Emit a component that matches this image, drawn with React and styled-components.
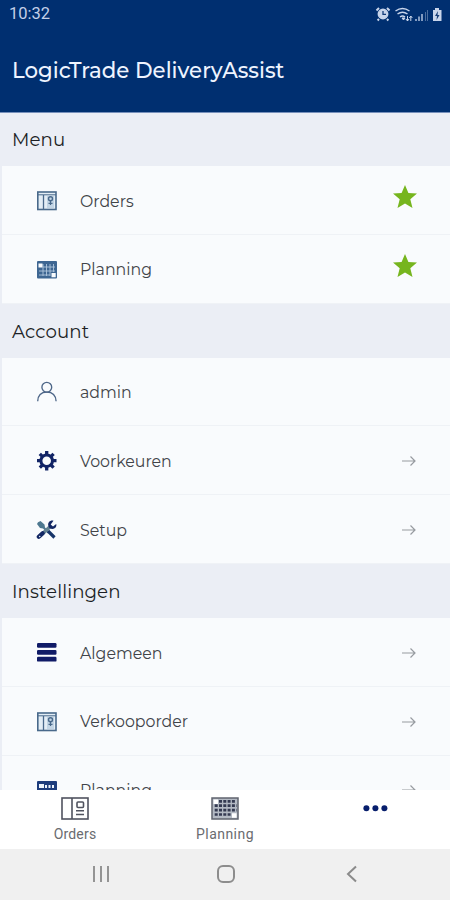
import React from "react";
import styled, { createGlobalStyle } from "styled-components";

const Global = createGlobalStyle`
  * { box-sizing: border-box; }
  body { margin: 0; background: #f9fbfd; }
`;

const Screen = styled.div`
  width: 450px;
  height: 900px;
  display: flex;
  flex-direction: column;
  overflow: hidden;
  font-family: Montserrat, Inter, sans-serif;
  background: #ebeef5;
`;

const Header = styled.header`
  flex: none;
  height: 113px;
  background: #002f70;
  border-bottom: 1px solid #7790bb;
`;

const StatusBar = styled.div`
  height: 28px;
  display: flex;
  align-items: center;
  justify-content: space-between;
  padding: 0 7px 0 9px;
`;

const Clock = styled.span`
  font: 400 16.5px/28px Roboto, sans-serif;
  color: #c3d0e8;
`;

const Title = styled.h1`
  margin: 27px 0 0 12px;
  font-size: 21.3px;
  line-height: 30px;
  font-weight: 500;
  color: #eef4ff;
  white-space: nowrap;
`;

const List = styled.main`
  flex: 1;
  min-height: 0;
  overflow: hidden;
`;

const SectionTitle = styled.h2`
  margin: 0;
  height: ${(p) => p.$height || 54}px;
  padding-left: 12px;
  font-size: 18.2px;
  line-height: ${(p) => (p.$height ? 53 : 55)}px;
  font-weight: 400;
  letter-spacing: 0.1px;
  color: #1c1f25;
`;

const Row = styled.div`
  height: 68.8px;
  margin-left: 2px;
  padding: 2px 34px 0 34px;
  display: flex;
  align-items: center;
  background: #f9fbfd;
  border-bottom: 1px solid #eff2f6;
`;

const RowIcon = styled.span`
  width: 22px;
  height: 22px;
  display: flex;
  margin-right: 22px;
`;

const Label = styled.span`
  flex: 1;
  padding-top: 1.4px;
  font-size: 15.8px;
  line-height: 22px;
  color: #414449;
`;

const StarSlot = styled.span`
  display: flex;
  margin: 0 -2px 7px 0;
`;

const Tabs = styled.nav`
  flex: none;
  height: 59px;
  display: grid;
  grid-template-columns: repeat(3, 1fr);
  background: #fff;
`;

const Tab = styled.div`
  display: flex;
  flex-direction: column;
  align-items: center;
  padding-top: 7px;
`;

const TabLabel = styled.span`
  margin-top: 5px;
  font: 400 14px/18px Roboto, sans-serif;
  letter-spacing: ${(p) => p.$track}px;
  color: #6a6c70;
`;

const SystemNav = styled.nav`
  flex: none;
  height: 51px;
  display: grid;
  grid-template-columns: repeat(3, 125.5px);
  justify-content: center;
  align-items: center;
  justify-items: center;
  padding: 0 0 1px 2px;
  background: #f0f0f0;
`;

const StatusIcons = () => (
  <svg width="68" height="20" viewBox="0 0 68 20" fill="none" stroke="#c8d5eb">
    <circle cx="8" cy="10" r="4.7" fill="#c8d5eb" strokeWidth="1.5" />
    <path d="M1.5 6.5 4 4M12 4l2.5 2.5M4 15l-1.4 1.5M12 15l1.4 1.5" strokeWidth="2" />
    <path d="M8 7v3.3h3" stroke="#123b78" strokeWidth="1.3" />
    <path d="M20.5 7q7-5 14 0M22.5 10q5-3.5 10 0M25 13q2.5-2 5 0" strokeWidth="1.5" />
    <path d="m27 14 1.5 2 1.5-2Z" fill="#c8d5eb" />
    <path d="M32.5 12v5m-1.5-2 1.5 2 1.5-2M35.8 17v-5m-1.5 2 1.5-2 1.5 2" strokeWidth="1" />
    <path d="M41 15v2M44 12.5V17M47 10v7" strokeWidth="2" opacity=".65" />
    <path d="M50.5 8v9M52.5 6v11" strokeWidth="1" opacity=".38" />
    <path d="M58 6h2V4h4v2h2.5v11H58Z" fill="#c8d5eb" stroke="none" />
    <path d="m63 7-3 5h2l-.5 4 3-5h-2Z" fill="#173e77" stroke="none" />
  </svg>
);

const OrdersIcon = () => (
  <svg width="22" height="22" viewBox="0 0 22 22" fill="none" stroke="#49698b">
    <rect x="1.8" y="2" width="18.2" height="17.5" fill="#e3edf5" strokeWidth="1.6" />
    <path d="M2 4.8h18" strokeWidth="1" />
    <path d="M7.5 5v14" strokeWidth="1.3" />
    <path d="M11 6h7v12h-7Z" fill="#c3d5e5" stroke="none" />
    <circle cx="14.5" cy="8.8" r="2" strokeWidth="1.4" />
    <path d="M14.5 11v4M12.5 13.3h4" strokeWidth="1.2" />
  </svg>
);

const PlanningIcon = () => (
  <svg width="22" height="22" viewBox="0 0 22 22">
    <rect x="1" y="2" width="20" height="17.5" rx="1" fill="#3e6692" />
    <path
      d="M7 8h12M3 12h16M3 16h11M7 5v12M10.5 5v12M14 5v12M17.5 5v8"
      stroke="#afc5dc"
      strokeWidth=".9"
      fill="none"
    />
    <path d="M2.5 4.5h4v4h-4ZM15.5 14h4.2v4.2h-4.2Z" fill="#f9fbfd" />
  </svg>
);

const PlanningCutIcon = () => (
  <svg width="22" height="22" viewBox="0 0 22 22">
    <rect x="1" y="2" width="20" height="17.5" rx="1" fill="#1d3c7c" />
    <path d="M3 5h5v4H3ZM9 6h2v3H9ZM12.5 6h2v3h-2ZM16 6h2v3h-2Z" fill="#edf4fc" />
    <path d="M3 12h16M3 16h16" stroke="#edf4fc" />
  </svg>
);

const PersonIcon = () => (
  <svg width="22" height="22" viewBox="0 0 22 22" fill="none" stroke="#4d6688" strokeWidth="1.35">
    <circle cx="10.8" cy="6.2" r="4.9" />
    <path d="M1.7 20.3c.2-6 3.8-9.2 9.1-9.2s9 3.2 9.3 9.2" />
  </svg>
);

const GearIcon = () => (
  <svg width="22" height="22" viewBox="0 0 22 22" fill="none" stroke="#122466">
    <circle cx="10.7" cy="10.7" r="5.8" strokeWidth="3" />
    <path
      d="M10.7 1v4M10.7 16.5v4M1 10.7h4M16.5 10.7h4M3.8 3.8l2.8 2.8M14.8 14.8l2.8 2.8M3.8 17.6l2.8-2.8M14.8 6.6l2.8-2.8"
      strokeWidth="3.3"
    />
  </svg>
);

const ToolsIcon = () => (
  <svg width="22" height="22" viewBox="0 0 22 22" fill="none">
    <path d="M2 3.3 4.5 2l4 3.5.5 3 5 4.5-2 1.5-5-5-3-.5-3-4Z" fill="#4e7890" />
    <path d="m12 12 6.5 6.5" stroke="#173469" strokeWidth="3.2" />
    <path d="M3.3 17.7 14 7.8" stroke="#638292" strokeWidth="3.6" />
    <path d="m2.8 17.8 3.8-3.5" stroke="#132764" strokeWidth="4.2" strokeLinecap="round" />
    <path d="M17.5 1.8c-3-1-6 1.7-5.2 4.6.6 3.4 4.2 4.4 6.3 2.8 1.7-1 2.1-3 1.6-4.3L17 7.4l-2.3-2Z" fill="#132764" />
    <circle cx="3.7" cy="17.5" r=".8" fill="#dce7f3" />
  </svg>
);

const BarsIcon = () => (
  <svg width="22" height="22" viewBox="0 0 22 22" fill="#101b67">
    <rect x="1" y="1" width="19.5" height="4.8" rx="1.2" />
    <rect x="1" y="7.9" width="19.5" height="4.8" rx="1.2" />
    <rect x="1" y="14.8" width="19.5" height="4.8" rx="1.2" />
  </svg>
);

const Star = () => (
  <StarSlot>
    <svg width="26" height="25" viewBox="0 0 26 25">
      <path d="m13 0 3.4 8.1 8.6.5-6.7 5.7 2.2 8.8-7.5-4.6-7.5 4.6 2.2-8.8L1 8.6l8.6-.5Z" fill="#76b51e" />
    </svg>
  </StarSlot>
);

const Arrow = () => (
  <svg width="14" height="12" viewBox="0 0 14 12" fill="none" stroke="#979ba0" strokeWidth="1.2">
    <path d="M0 6h13M8.5 1.5 13 6l-4.5 4.5" />
  </svg>
);

const TabOrdersIcon = () => (
  <svg width="28" height="23" viewBox="0 0 28 23" fill="none" stroke="#50535f" strokeWidth="1.6">
    <rect x="1" y="1" width="26" height="21" />
    <path d="M11 1v21" />
    <rect x="16" y="5" width="6.5" height="5.5" rx="1" />
    <path d="M15 13.8h8M15 17.5h8" />
  </svg>
);

const TabPlanningIcon = () => (
  <svg width="28" height="23" viewBox="0 0 28 23">
    <rect x="1" y="1" width="26" height="21" fill="#b4bac4" stroke="#60646f" strokeWidth="1.5" />
    <path
      d="M8 4.3h17M3.7 8.7h22M3.7 13.1h22M3.7 17.5h17"
      stroke="#343a51"
      strokeWidth="2.7"
      strokeDasharray="3 1.3"
    />
    <path d="M2.5 2.5H7V7H2.5ZM21 16.2h4.6v4.5H21Z" fill="#fff" />
  </svg>
);

const MoreIcon = () => (
  <svg width="26" height="22" viewBox="0 0 26 22" fill="#071e6c">
    <circle cx="4.4" cy="11.3" r="3" />
    <circle cx="13.4" cy="11.3" r="3" />
    <circle cx="22.4" cy="11.3" r="3" />
  </svg>
);

const sections = [
  {
    title: "Menu",
    height: 53,
    rows: [
      { label: "Orders", Icon: OrdersIcon, End: Star },
      { label: "Planning", Icon: PlanningIcon, End: Star },
    ],
  },
  {
    title: "Account",
    rows: [
      { label: "admin", Icon: PersonIcon },
      { label: "Voorkeuren", Icon: GearIcon, End: Arrow },
      { label: "Setup", Icon: ToolsIcon, End: Arrow },
    ],
  },
  {
    title: "Instellingen",
    rows: [
      { label: "Algemeen", Icon: BarsIcon, End: Arrow },
      { label: "Verkooporder", Icon: OrdersIcon, End: Arrow },
      { label: "Planning", Icon: PlanningCutIcon, End: Arrow },
    ],
  },
];

export default function App() {
  return (
    <Screen>
      <Global />
      <Header>
        <StatusBar>
          <Clock>10:32</Clock>
          <StatusIcons />
        </StatusBar>
        <Title>LogicTrade DeliveryAssist</Title>
      </Header>
      <List>
        {sections.map(({ title, height, rows }) => (
          <section key={title}>
            <SectionTitle $height={height}>{title}</SectionTitle>
            {rows.map(({ label, Icon, End }) => (
              <Row key={label}>
                <RowIcon><Icon /></RowIcon>
                <Label>{label}</Label>
                {End && <End />}
              </Row>
            ))}
          </section>
        ))}
      </List>
      <Tabs>
        <Tab>
          <TabOrdersIcon />
          <TabLabel $track={0.2}>Orders</TabLabel>
        </Tab>
        <Tab>
          <TabPlanningIcon />
          <TabLabel $track={0.45}>Planning</TabLabel>
        </Tab>
        <Tab><MoreIcon /></Tab>
      </Tabs>
      <SystemNav>
        <svg width="18" height="18" viewBox="0 0 18 18" stroke="#949494" strokeWidth="2">
          <path d="M2 1v16M9 1v16M16 1v16" />
        </svg>
        <svg width="20" height="20" viewBox="0 0 20 20" fill="none" stroke="#8d8d8d" strokeWidth="2">
          <rect x="2" y="2" width="16" height="16" rx="5" />
        </svg>
        <svg width="12" height="18" viewBox="0 0 12 18" fill="none" stroke="#8b8b8b" strokeWidth="2">
          <path d="m10 1.5-8 7.5 8 7.5" />
        </svg>
      </SystemNav>
    </Screen>
  );
}
